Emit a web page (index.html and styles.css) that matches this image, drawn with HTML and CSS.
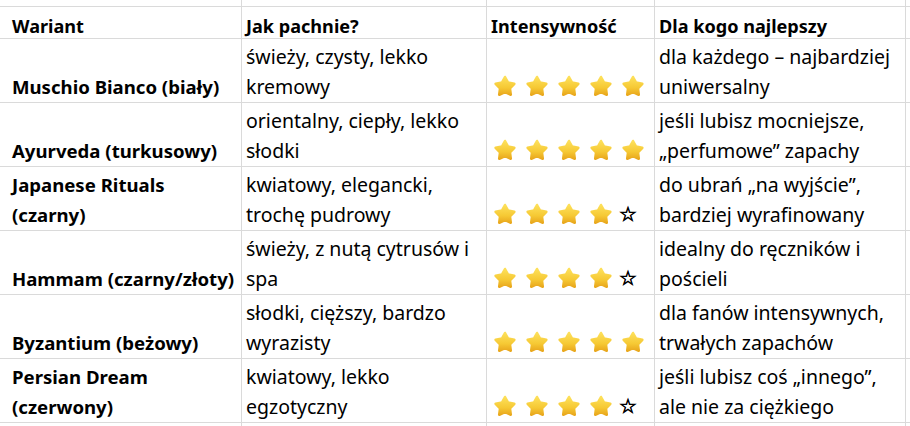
FILE: index.html
```html
<!DOCTYPE html>
<html lang="pl">
<head>
<meta charset="utf-8">
<title>Warianty</title>
<link rel="stylesheet" href="styles.css">
</head>
<body>
<svg class="defs" width="0" height="0" aria-hidden="true">
  <defs>
    <linearGradient id="sg" x1="0" y1="0" x2="0" y2="1">
      <stop offset="0" stop-color="#fde05a"/>
      <stop offset="0.6" stop-color="#f6c934"/>
      <stop offset="1" stop-color="#e9a81e"/>
    </linearGradient>
    <symbol id="star" viewBox="0 0 24 24">
      <path d="M12 3 L15.06 8.59 L21.32 9.77 L16.95 14.41 L17.76 20.73 L12 18 L6.24 20.73 L7.05 14.41 L2.68 9.77 L8.94 8.59 Z" fill="url(#sg)" stroke="url(#sg)" stroke-width="2.6" stroke-linejoin="round"/>
    </symbol>
  </defs>
</svg>
<div class="sheet">
  <div class="c"></div><div class="c"></div><div class="c"></div><div class="c"></div><div class="c"></div><div class="c"></div>

  <div class="c"></div>
  <div class="c b h">Wariant</div>
  <div class="c b h">Jak pachnie?</div>
  <div class="c b h">Intensywność</div>
  <div class="c b h">Dla kogo najlepszy</div>
  <div class="c"></div>

  <div class="c"></div>
  <div class="c b">Muschio Bianco (biały)</div>
  <div class="c">świeży, czysty, lekko<br>kremowy</div>
  <div class="c stars"><svg class="s"><use href="#star"/></svg><svg class="s"><use href="#star"/></svg><svg class="s"><use href="#star"/></svg><svg class="s"><use href="#star"/></svg><svg class="s"><use href="#star"/></svg></div>
  <div class="c">dla każdego – najbardziej<br>uniwersalny</div>
  <div class="c"></div>

  <div class="c"></div>
  <div class="c b">Ayurveda (turkusowy)</div>
  <div class="c">orientalny, ciepły, lekko<br>słodki</div>
  <div class="c stars"><svg class="s"><use href="#star"/></svg><svg class="s"><use href="#star"/></svg><svg class="s"><use href="#star"/></svg><svg class="s"><use href="#star"/></svg><svg class="s"><use href="#star"/></svg></div>
  <div class="c">jeśli lubisz mocniejsze,<br>„perfumowe” zapachy</div>
  <div class="c"></div>

  <div class="c"></div>
  <div class="c b">Japanese Rituals<br>(czarny)</div>
  <div class="c">kwiatowy, elegancki,<br>trochę pudrowy</div>
  <div class="c stars"><svg class="s"><use href="#star"/></svg><svg class="s"><use href="#star"/></svg><svg class="s"><use href="#star"/></svg><svg class="s"><use href="#star"/></svg><span class="o">☆</span></div>
  <div class="c">do ubrań „na wyjście”,<br>bardziej wyrafinowany</div>
  <div class="c"></div>

  <div class="c"></div>
  <div class="c b">Hammam (czarny/złoty)</div>
  <div class="c">świeży, z nutą cytrusów i<br>spa</div>
  <div class="c stars"><svg class="s"><use href="#star"/></svg><svg class="s"><use href="#star"/></svg><svg class="s"><use href="#star"/></svg><svg class="s"><use href="#star"/></svg><span class="o">☆</span></div>
  <div class="c">idealny do ręczników i<br>pościeli</div>
  <div class="c"></div>

  <div class="c"></div>
  <div class="c b">Byzantium (beżowy)</div>
  <div class="c">słodki, cięższy, bardzo<br>wyrazisty</div>
  <div class="c stars"><svg class="s"><use href="#star"/></svg><svg class="s"><use href="#star"/></svg><svg class="s"><use href="#star"/></svg><svg class="s"><use href="#star"/></svg><svg class="s"><use href="#star"/></svg></div>
  <div class="c">dla fanów intensywnych,<br>trwałych zapachów</div>
  <div class="c"></div>

  <div class="c"></div>
  <div class="c b">Persian Dream<br>(czerwony)</div>
  <div class="c">kwiatowy, lekko<br>egzotyczny</div>
  <div class="c stars"><svg class="s"><use href="#star"/></svg><svg class="s"><use href="#star"/></svg><svg class="s"><use href="#star"/></svg><svg class="s"><use href="#star"/></svg><span class="o">☆</span></div>
  <div class="c">jeśli lubisz coś „innego”,<br>ale nie za ciężkiego</div>
  <div class="c"></div>

  <div class="c"></div><div class="c"></div><div class="c"></div><div class="c"></div><div class="c"></div><div class="c"></div>
</div>
</body>
</html>
```
FILE: styles.css
```css
html, body {
  margin: 0;
  padding: 0;
  background: #ffffff;
}
body {
  width: 910px;
  height: 426px;
  overflow: hidden;
}
.defs {
  position: absolute;
  width: 0;
  height: 0;
}
.sheet {
  display: grid;
  grid-template-columns: 7px 233px 244px 167px 250px 1fr;
  grid-template-rows: 6px 31px repeat(6, 63px) 1fr;
  gap: 1px;
  background: #dadada;
  width: 910px;
  height: 426px;
  font-family: "Noto Sans", "Open Sans", sans-serif;
  font-size: 19.5px;
  line-height: 30px;
  color: #000;
}
.c {
  background: #fff;
  display: flex;
  flex-direction: column;
  justify-content: flex-end;
  padding: 0 4px 0 4px;
  white-space: nowrap;
  overflow: hidden;
}
.b {
  font-weight: 700;
  font-size: 18.6px;
}
.h {
  font-size: 18.1px;
  line-height: 24px;
}
.stars {
  flex-direction: row;
  align-items: flex-end;
  justify-content: flex-start;
  padding: 0 0 4px 6px;
  gap: 8px;
}
.s {
  width: 24px;
  height: 24px;
  flex: none;
}
.o {
  font-family: "DejaVu Sans", sans-serif;
  font-size: 20px;
  line-height: 22px;
  color: #000;
  -webkit-text-stroke: 0.7px #000;
  margin-left: -2px;
  margin-bottom: 1px;
}
```
